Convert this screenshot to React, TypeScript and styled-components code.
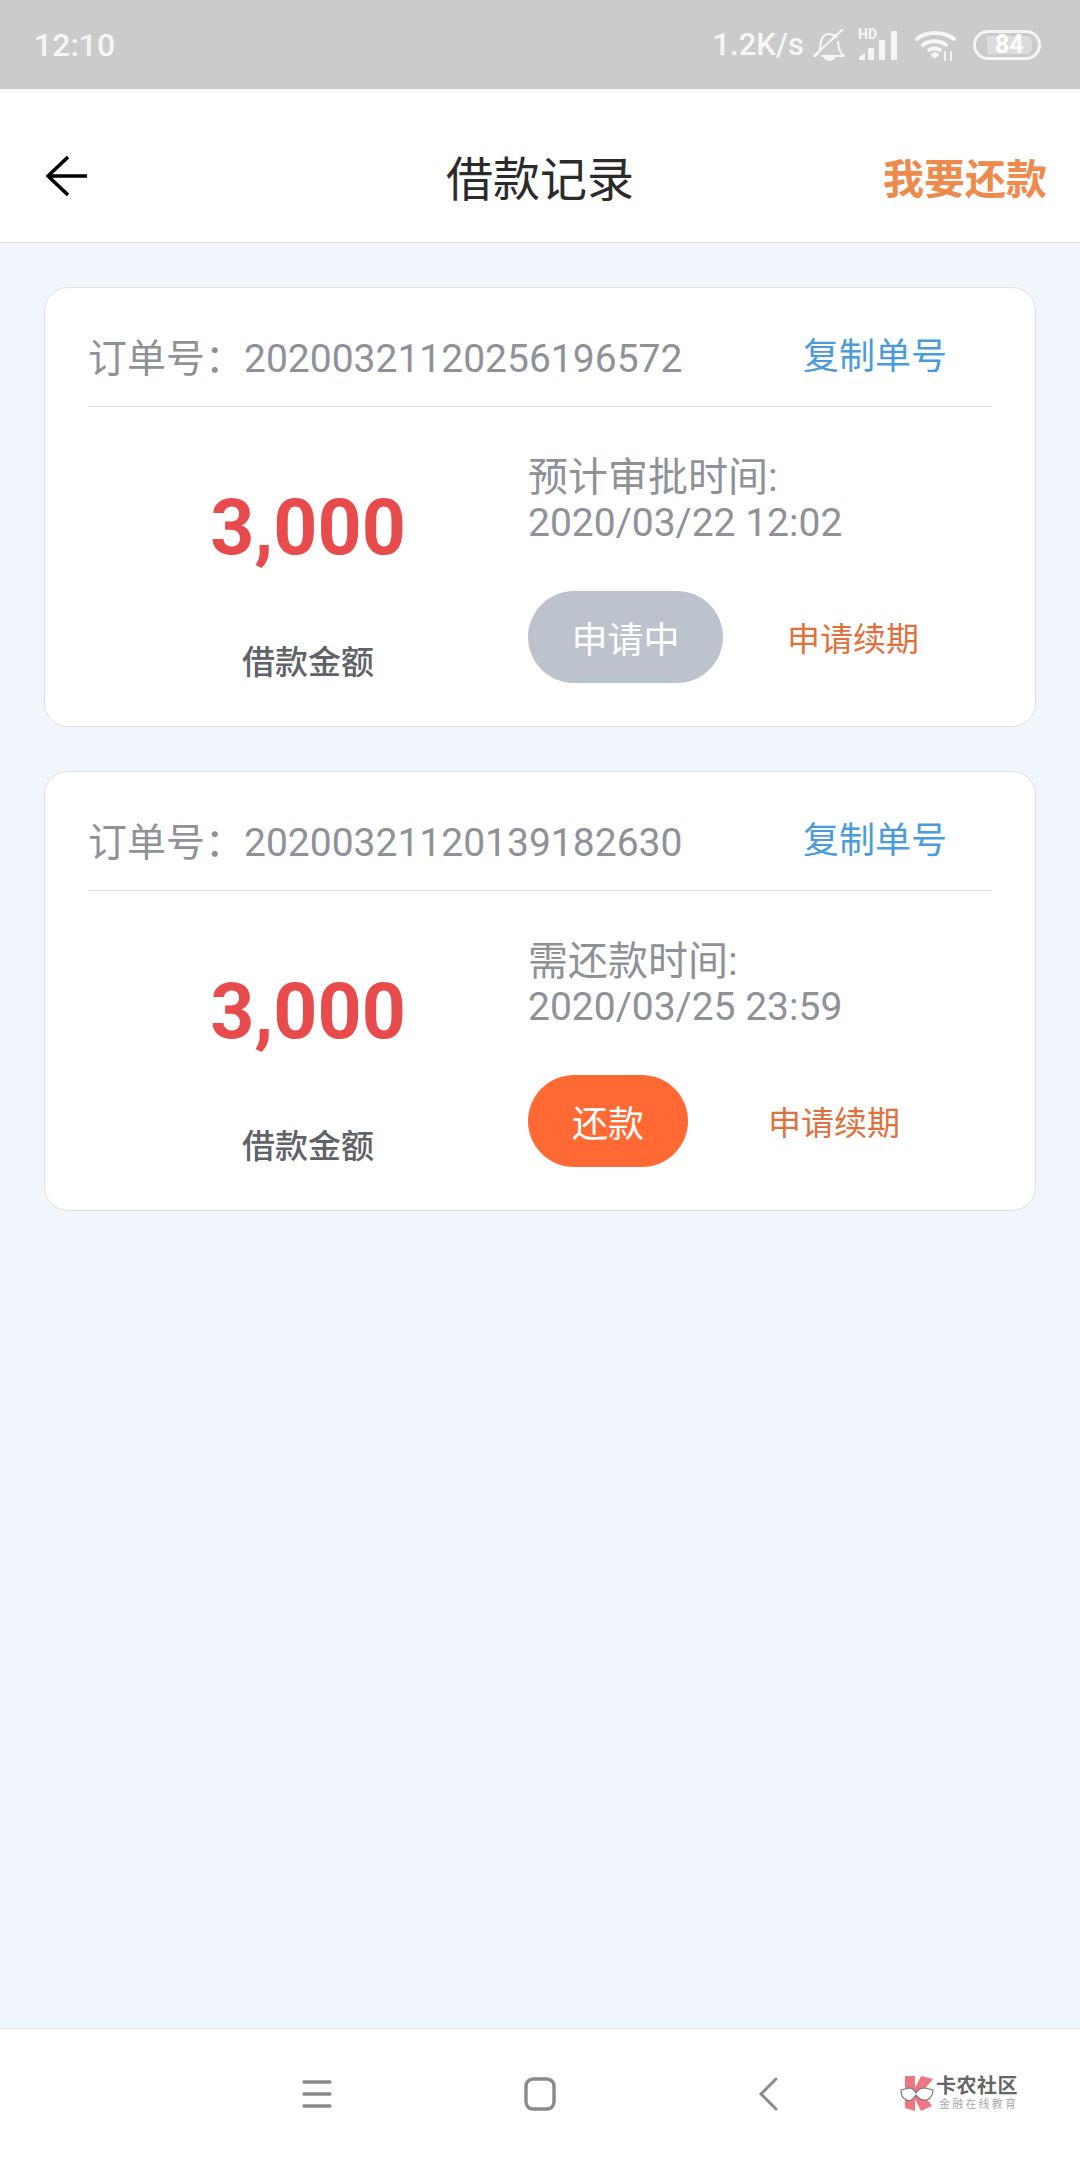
import React from "react";
import styled, { createGlobalStyle } from "styled-components";

const Global = createGlobalStyle`
  html, body { margin: 0; padding: 0; background: #f1f5fc; }
  * { box-sizing: border-box; }
  body { font-family: Roboto, "Noto Sans CJK SC", sans-serif; }
`;

const Page = styled.div`
  width: 1080px;
  height: 2158px;
  display: flex;
  flex-direction: column;
  overflow: hidden;
  background: #f1f5fc;
`;

const StatusBar = styled.div`
  height: 89px;
  flex: none;
  background: #cbcbcb;
  color: #f6f6f6;
  display: flex;
  align-items: center;
  justify-content: space-between;
  padding: 0 39px 0 34px;
`;
const Clock = styled.span`
  font-size: 32px;
  font-weight: 500;
`;
const StatusIcons = styled.div`
  display: flex;
  align-items: center;
`;
const Speed = styled.span`
  font-size: 31px;
  font-weight: 500;
  margin-right: 9px;
`;
const SignalWrap = styled.div`
  position: relative;
  width: 41px;
  height: 30px;
  margin: 0 16px 0 13px;
`;
const HdLabel = styled.span`
  position: absolute;
  left: 0;
  top: -3px;
  font-size: 14px;
  line-height: 14px;
  font-weight: 700;
`;
const Battery = styled.div`
  width: 68px;
  height: 30px;
  margin-left: 16px;
  border: 3px solid #f6f6f6;
  border-radius: 15px;
  padding: 3px 6px 3px 11px;
  display: flex;
`;
const BatteryFill = styled.div`
  flex: 1;
  background: #dcdcdc;
  border-radius: 0 6px 6px 0;
  color: #fff;
  font-size: 25px;
  font-weight: 700;
  line-height: 18px;
  padding-left: 8px;
`;

const Header = styled.header`
  height: 154px;
  flex: none;
  background: #fff;
  border-bottom: 1px solid #dcdfe4;
  display: grid;
  grid-template-columns: 1fr auto 1fr;
  align-items: center;
  padding: 20px 46px 0;
`;
const Title = styled.h1`
  margin: 0;
  font-size: 47px;
  font-weight: 400;
  color: #2b2b2b;
`;
const HeaderAction = styled.span`
  justify-self: end;
  margin-right: -13px;
  font-size: 41px;
  font-weight: 700;
  color: #ee8a4b;
`;

const Main = styled.main`
  flex: 1;
  display: flex;
  flex-direction: column;
  gap: 44px;
  padding: 44px 44px 0;
`;
const Card = styled.section`
  height: 440px;
  background: #fff;
  border: 1px solid #dcdfe6;
  border-radius: 24px;
  padding: 0 43px;
`;
const OrderRow = styled.div`
  height: 119px;
  border-bottom: 1px solid #dfe2e7;
  display: flex;
  justify-content: space-between;
  padding: 27px 45px 0 0;
`;
const OrderText = styled.span`
  font-size: 39px;
  line-height: 88px;
  height: 88px;
  color: #8e9298;
`;
const CopyLink = styled.span`
  font-size: 36px;
  line-height: 48px;
  margin-top: 18px;
  color: #4a9bdc;
`;
const CardBody = styled.div`
  display: flex;
`;
const AmountCol = styled.div`
  width: 440px;
  flex: none;
  display: flex;
  flex-direction: column;
  align-items: center;
  padding-top: 75px;
`;
const Amount = styled.div`
  font-size: 77px;
  line-height: 92px;
  font-weight: 700;
  color: #e84b4b;
`;
const AmountLabel = styled.div`
  margin-top: 67px;
  font-size: 33px;
  line-height: 44px;
  font-weight: 500;
  color: #5f6368;
`;
const InfoCol = styled.div`
  padding-top: 49px;
`;
const InfoLabel = styled.div`
  font-size: 40px;
  line-height: 44px;
  color: #8e9298;
`;
const InfoTime = styled.div`
  font-size: 39px;
  line-height: 46px;
  color: #8e9298;
`;
const ActionRow = styled.div<{ $gap: number }>`
  display: flex;
  align-items: center;
  gap: ${(p) => p.$gap}px;
  margin-top: 45px;
`;
const Pill = styled.div<{ $bg: string; $width: number }>`
  width: ${(p) => p.$width}px;
  height: 92px;
  border-radius: 46px;
  background: ${(p) => p.$bg};
  color: #fff;
  font-size: 36px;
  display: flex;
  align-items: center;
  justify-content: center;
`;
const RenewLink = styled.span`
  font-size: 33px;
  color: #e0703c;
`;

const NavBar = styled.nav`
  height: 130px;
  flex: none;
  background: #fff;
  border-top: 1px solid #e4e7ec;
  display: flex;
  align-items: center;
  position: relative;
  padding: 0 0 0 302px;
`;
const NavIcon = styled.svg<{ $mr: number }>`
  display: block;
  margin-right: ${(p) => p.$mr}px;
  flex: none;
`;
const Brand = styled.div`
  display: flex;
  align-items: center;
  gap: 1px;
  margin-left: 121px;
`;
const BrandText = styled.div`
  display: flex;
  flex-direction: column;
`;
const BrandName = styled.span`
  font-size: 20px;
  line-height: 22px;
  font-weight: 700;
  letter-spacing: 0.5px;
  color: #666;
`;
const BrandSub = styled.span`
  font-size: 11px;
  line-height: 16px;
  letter-spacing: 2.2px;
  margin-left: 3px;
  color: #aaa;
`;

const orders = [
  {
    no: "20200321120256196572",
    label: "预计审批时间:",
    time: "2020/03/22 12:02",
    action: "申请中",
    bg: "#bdc3cc",
    width: 195,
    gap: 64,
  },
  {
    no: "20200321120139182630",
    label: "需还款时间:",
    time: "2020/03/25 23:59",
    action: "还款",
    bg: "#ff6933",
    width: 160,
    gap: 80,
  },
];

export default function App() {
  return (
    <Page>
      <Global />
      <StatusBar>
        <Clock>12:10</Clock>
        <StatusIcons>
          <Speed>1.2K/s</Speed>
          <svg width="32" height="32" viewBox="0 0 32 32" fill="none" stroke="#f6f6f6" strokeWidth="2.2" strokeLinecap="round" strokeLinejoin="round">
            <path d="M2 27c3-2 5-5 5.500-11C8 9 11 5 16 5c3 0 5 1 7 3" />
            <path d="M25 13c.5 6 2 11 6 14H9" />
            <path d="M1 27 L29 1" />
            <path d="M12 29h9l-4.500 2.500z" fill="#f6f6f6" />
          </svg>
          <SignalWrap>
            <HdLabel>HD</HdLabel>
            <svg width="41" height="30" viewBox="0 0 41 30" fill="#f6f6f6">
              <path d="M1 30v-3l6-4v7z" />
              <rect x="10" y="18" width="6" height="12" rx="1" />
              <rect x="21" y="10" width="6" height="20" rx="1" />
              <rect x="33" y="1" width="6" height="29" rx="1" />
            </svg>
          </SignalWrap>
          <svg width="42" height="32" viewBox="0 0 42 32" fill="none" stroke="#f6f6f6" strokeWidth="3.8" strokeLinecap="round">
            <path d="M2 10C11 2 29 2 39 10" />
            <path d="M8 16c6-5 17-5 23 0" />
            <path d="M14 21c3-2 8-2 11 0" />
            <path d="M16 26l4-3 4 3-4 3z" fill="#f6f6f6" strokeWidth="1" />
            <path d="M30 32v-9M36 32v-9" strokeWidth="1.8" />
          </svg>
          <Battery>
            <BatteryFill>84</BatteryFill>
          </Battery>
        </StatusIcons>
      </StatusBar>

      <Header>
        <svg width="41" height="40" viewBox="0 0 41 40" fill="none" stroke="#000" strokeWidth="3.6">
          <path d="M22 1 L2 20 L22 39" />
          <path d="M2 20 H41" />
        </svg>
        <Title>借款记录</Title>
        <HeaderAction>我要还款</HeaderAction>
      </Header>

      <Main>
        {orders.map((o) => (
          <Card key={o.no}>
            <OrderRow>
              <OrderText>订单号：{o.no}</OrderText>
              <CopyLink>复制单号</CopyLink>
            </OrderRow>
            <CardBody>
              <AmountCol>
                <Amount>3,000</Amount>
                <AmountLabel>借款金额</AmountLabel>
              </AmountCol>
              <InfoCol>
                <InfoLabel>{o.label}</InfoLabel>
                <InfoTime>{o.time}</InfoTime>
                <ActionRow $gap={o.gap}>
                  <Pill $bg={o.bg} $width={o.width}>{o.action}</Pill>
                  <RenewLink>申请续期</RenewLink>
                </ActionRow>
              </InfoCol>
            </CardBody>
          </Card>
        ))}
      </Main>

      <NavBar>
        <NavIcon $mr={192} width="30" height="28" viewBox="0 0 30 28" fill="none" stroke="#8a8a8a" strokeWidth="3.4" strokeLinecap="round">
          <path d="M2 2H28M2 14H28M2 26H28" />
        </NavIcon>
        <NavIcon $mr={202} width="32" height="34" viewBox="0 0 32 34" fill="none" stroke="#8a8a8a" strokeWidth="3.4">
          <rect x="2" y="2" width="28" height="30" rx="7" />
        </NavIcon>
        <NavIcon $mr={0} width="20" height="34" viewBox="0 0 20 34" fill="none" stroke="#8a8a8a" strokeWidth="3" strokeLinecap="round">
          <path d="M18 2 L3 17 L18 32" />
        </NavIcon>
        <Brand>
          <svg width="36" height="38" viewBox="0 0 36 38">
            <path d="M6 1H16V36L6 33Z" fill="#ee7680" />
            <path d="M22 1L34 4L23 17L33 31L22 36L15 22V15Z" fill="#ee7680" />
            <path d="M2 15 L10 13 C14 13 16 16 17 18 C19 14 23 13 26 13 L34 15 C34 21 30 26 25 25 C21 25 19 22 17 20 C15 23 12 27 8 25 C4 24 2 20 2 15Z" fill="#fff" stroke="#777" strokeWidth="1.2" />
          </svg>
          <BrandText>
            <BrandName>卡农社区</BrandName>
            <BrandSub>金融在线教育</BrandSub>
          </BrandText>
        </Brand>
      </NavBar>
    </Page>
  );
}
